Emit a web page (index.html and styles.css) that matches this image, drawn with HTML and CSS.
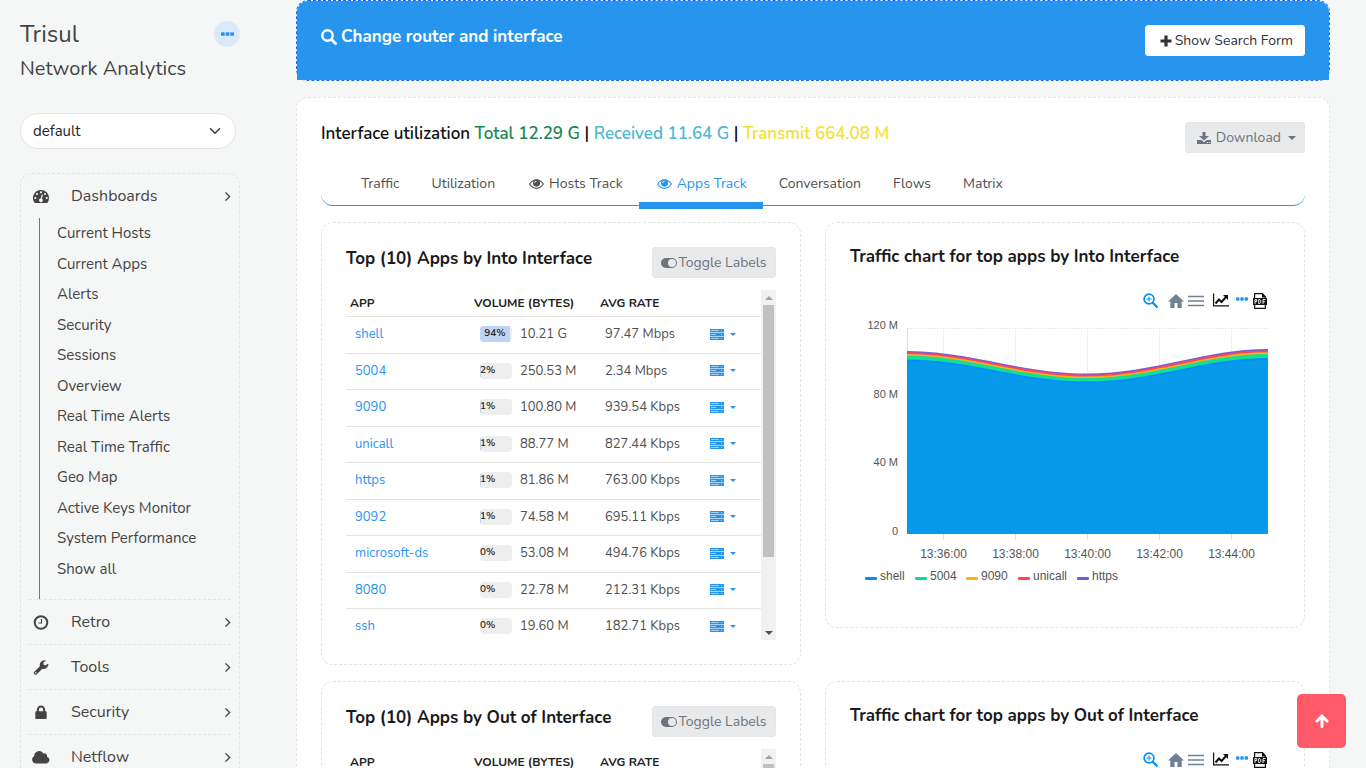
FILE: index.html
```html
<!DOCTYPE html>
<html lang="en">
<head>
<meta charset="utf-8">
<title>Trisul Network Analytics</title>
<link rel="stylesheet" href="styles.css">
</head>
<body>
<svg class="sprite" aria-hidden="true">
  <symbol id="i-chev" viewBox="-3 0 16 16"><path d="M5 2l6 6-6 6" fill="none" stroke="currentColor" stroke-width="2"/></symbol>
  <symbol id="i-down" viewBox="0 0 16 16"><path d="M2 5l6 6 6-6" fill="none" stroke="currentColor" stroke-width="2" stroke-linecap="round" stroke-linejoin="round"/></symbol>
  <symbol id="i-gauge" viewBox="-1 -1 18 15"><path fill="currentColor" fill-rule="evenodd" d="M8 0a8 8 0 0 1 8 8c0 1.600-.4 3-1.200 4.300-.2.400-.5.700-.9.700H2.100c-.4 0-.7-.3-.9-.700A8 8 0 0 1 8 0zM2.300 6.900a1.100 1.100 0 1 0 0 2.200 1.100 1.100 0 0 0 0-2.200zM4 2.900a1.100 1.100 0 1 0 0 2.200 1.100 1.100 0 0 0 0-2.200zM8 1.200a1.100 1.100 0 1 0 0 2.200 1.100 1.100 0 0 0 0-2.200zM12 2.900a1.100 1.100 0 1 0 0 2.200 1.100 1.100 0 0 0 0-2.200zM13.700 6.900a1.100 1.100 0 1 0 0 2.200 1.100 1.100 0 0 0 0-2.200zM8.700 4.500L7.700 8.500a1.800 1.800 0 1 0 1.200.3l1-4z"/></symbol>
  <symbol id="i-clock" viewBox="0.500 0.500 15 15"><circle cx="8" cy="8" r="6.300" fill="none" stroke="currentColor" stroke-width="2"/><path d="M8.500 4.500v4h-3" fill="none" stroke="currentColor" stroke-width="1.200"/></symbol>
  <symbol id="i-wrench" viewBox="0 0 16 16"><path fill="currentColor" fill-rule="evenodd" d="M9.400 9.300l-6.200 6.100c-.5.500-1.200.5-1.700 0l-.9-.9c-.5-.5-.5-1.200 0-1.700l6.200-6.200a5 5 0 0 1 6.700-5.900l-2.900 1.800v2.200l2 1.100 2.900-1.700c.3 0 .4.200.4.500A5 5 0 0 1 9.400 9.300zM2.500 12.700a.8.800 0 1 0 0 1.600.8.800 0 0 0 0-1.600z"/></symbol>
  <symbol id="i-lock" viewBox="0.500 1 15 14.500"><path fill="currentColor" fill-rule="evenodd" d="M4 7V5.500a4 4 0 0 1 8 0V7h.5c.6 0 1 .4 1 1v5.500c0 .6-.4 1-1 1h-9c-.6 0-1-.4-1-1V8c0-.6.400-1 1-1zm2 0h4V5.500a2 2 0 0 0-4 0z"/></symbol>
  <symbol id="i-cloud" viewBox="0 0 18 14"><path fill="currentColor" d="M4 13a4 4 0 0 1-1.800-7.500A5 5 0 0 1 11.500 3 2.700 2.700 0 0 1 15 6.200 3.500 3.500 0 0 1 14.500 13z"/></symbol>
  <symbol id="i-search" viewBox="0 0 16 16"><circle cx="6.500" cy="6.500" r="5.200" fill="none" stroke="currentColor" stroke-width="2.400"/><path d="M10.500 10.500l4 4" stroke="currentColor" stroke-width="2.800" stroke-linecap="round"/></symbol>
  <symbol id="i-plus" viewBox="0 0 12 12"><path d="M6 .5v11M.5 6h11" stroke="currentColor" stroke-width="3.200"/></symbol>
  <symbol id="i-download" viewBox="0 0 14 14"><path fill="currentColor" fill-rule="evenodd" d="M5.500 1h3v4H12L7 9.500 2 5h3.500zM0 9h4.200L7 11.300 9.800 9H14v4H0zm10 2v1h1v-1zm2 0v1h1v-1z"/></symbol>
  <symbol id="i-eye" viewBox="0 0 16 12"><path d="M.7 6C2.600 3 5.100 1.400 8 1.400S13.400 3 15.300 6C13.400 9 10.900 10.600 8 10.600S2.600 9 .7 6z" fill="none" stroke="currentColor" stroke-width="1.200"/><circle cx="8" cy="5" r="3.800" fill="currentColor"/><path d="M6 5a2 2 0 0 1 2-2" stroke="#fff" stroke-width=".9" fill="none"/></symbol>
  <symbol id="i-toggle" viewBox="0 0 16 10"><path fill="currentColor" fill-rule="evenodd" d="M5 0h6a5 5 0 0 1 0 10H5A5 5 0 0 1 5 0zm6 1a4 4 0 1 0 0 8 4 4 0 0 0 0-8z"/></symbol>
  <symbol id="i-server" viewBox="0 0 14 11"><path fill="currentColor" fill-opacity=".4" d="M0 0h14v11H0z"/><path fill="currentColor" d="M0 0h14v3H0zM0 4h14v3H0zM0 8h14v3H0z"/><path stroke="#fff" stroke-opacity=".55" d="M1 1.500h8M1 5.500h5M1 9.500h8M11 1.500h1M11 5.500h1M11 9.500h1"/></symbol>
  <symbol id="i-up" viewBox="0 0 16 16"><path d="M8 13.500V4M3 8l5-5 5 5" fill="none" stroke="currentColor" stroke-width="3" stroke-linecap="round"/></symbol>
  <symbol id="i-dots" viewBox="0 0 14 4"><path fill="currentColor" d="M1 0h2q1 0 1 1v2q0 1-1 1H1Q0 4 0 3V1q0-1 1-1zM6 0h2q1 0 1 1v2q0 1-1 1H6Q5 4 5 3V1q0-1 1-1zM11 0h2q1 0 1 1v2q0 1-1 1h-2q-1 0-1-1V1q0-1 1-1z"/></symbol>
  <symbol id="i-zoom" viewBox="0 0 16 16"><circle cx="6" cy="6" r="4.900" fill="none" stroke="currentColor" stroke-width="1.700"/><path d="M9.500 9.500l5 5" stroke="currentColor" stroke-width="2.300"/><path d="M6 3.500v5M3.500 6h5" stroke="currentColor"/></symbol>
  <symbol id="i-home" viewBox="0 0 16 14"><path fill="currentColor" d="M8 0l8 7.500h-2.300V14H9.500V9h-3v5H2.300V7.500H0z"/></symbol>
  <symbol id="i-menu" viewBox="0 0 16 12"><path stroke="currentColor" stroke-width="1.600" d="M0 1.500h16M0 6h16M0 10.500h16"/></symbol>
  <symbol id="i-line" viewBox="0 0 16 13"><path fill="none" stroke="currentColor" stroke-width="1.200" d="M.6 0v12.400H16"/><path fill="none" stroke="currentColor" stroke-width="2" d="M2.500 10L6 6l2.500 2.500L13 3.500"/><path fill="currentColor" d="M10 1.500h5v5z"/></symbol>
  <symbol id="i-pdf" viewBox="0 0 14 16"><path fill="none" stroke="currentColor" stroke-width="1.200" d="M1.600 5V.6H9.500L12.400 4V5M1.600 12v3.400h10.800V12"/><path fill="currentColor" d="M9 0l4 4.500H9zM0 5h14v7H0z"/><path fill="none" stroke="#fff" stroke-width=".9" d="M2 11V6.500h1.800v2H2M5.700 6.500v4h1.200l.8-.8V7.300l-.8-.8zM10 11V6.500h2.500M10 8.700h2"/></symbol>
</svg>

<div class="layout">
<aside class="sidebar">
  <header class="brand">
    <div><h1 class="brand-name">Trisul</h1><p class="brand-sub">Network Analytics</p></div>
    <button class="round" aria-label="More"><svg class="dots"><use href="#i-dots"/></svg></button>
  </header>
  <label class="context"><select class="context-select" aria-label="Context"><option>default</option></select><svg class="context-arrow"><use href="#i-down"/></svg></label>
  <nav class="nav">
    <a class="nav-item" href="#"><svg class="nav-icon"><use href="#i-gauge"/></svg><span>Dashboards</span><svg class="chev"><use href="#i-chev"/></svg></a>
    <div class="subnav">
      <a href="#">Current Hosts</a><a href="#">Current Apps</a><a href="#">Alerts</a><a href="#">Security</a><a href="#">Sessions</a><a href="#">Overview</a><a href="#">Real Time Alerts</a><a href="#">Real Time Traffic</a><a href="#">Geo Map</a><a href="#">Active Keys Monitor</a><a href="#">System Performance</a><a href="#">Show all</a>
    </div>
    <a class="nav-item" href="#"><svg class="nav-icon"><use href="#i-clock"/></svg><span>Retro</span><svg class="chev"><use href="#i-chev"/></svg></a>
    <a class="nav-item" href="#"><svg class="nav-icon"><use href="#i-wrench"/></svg><span>Tools</span><svg class="chev"><use href="#i-chev"/></svg></a>
    <a class="nav-item" href="#"><svg class="nav-icon"><use href="#i-lock"/></svg><span>Security</span><svg class="chev"><use href="#i-chev"/></svg></a>
    <a class="nav-item" href="#"><svg class="nav-icon"><use href="#i-cloud"/></svg><span>Netflow</span><svg class="chev"><use href="#i-chev"/></svg></a>
  </nav>
</aside>

<main class="main">
  <section class="banner">
    <div class="banner-body">
      <h2 class="banner-title"><svg class="ic16"><use href="#i-search"/></svg> Change router and interface</h2>
      <button class="btn btn-white"><svg class="ic12"><use href="#i-plus"/></svg>Show Search Form</button>
    </div>
  </section>
  <section class="panel">
    <div class="panel-head">
      <h2 class="util">Interface utilization <span class="total">Total 12.29 G</span> | <span class="recv">Received 11.64 G</span> | <span class="xmit">Transmit 664.08 M</span></h2>
      <button class="btn btn-grey btn-download"><svg class="ic14"><use href="#i-download"/></svg>Download<i class="caret"></i></button>
    </div>
    <nav class="tabs">
      <a href="#">Traffic</a><a href="#">Utilization</a><a href="#"><svg class="eye"><use href="#i-eye"/></svg>Hosts Track</a><a href="#" class="active"><svg class="eye"><use href="#i-eye"/></svg>Apps Track</a><a href="#">Conversation</a><a href="#">Flows</a><a href="#">Matrix</a>
    </nav>
    <div class="grid" id="grid"></div>
  </section>
</main>
</div>
<button class="to-top" aria-label="Back to top"><svg class="ic16"><use href="#i-up"/></svg></button>
<script src="app.js"></script>
</body>
</html>
```
FILE: styles.css
```css
* { box-sizing: border-box; }
html { height: 100%; overflow: hidden; }
body { margin: 0; height: 100%; overflow: hidden; background: #f4f7f6; color: #444; font: 14px/20px Nunito, Lato, sans-serif; }
a { color: inherit; text-decoration: none; }
h1, h2, h3, p { margin: 0; font-weight: 400; }
button, select { font: inherit; }
svg { flex: none; }
.sprite { display: none; }
.layout { display: flex; align-items: flex-start; }
.sidebar { width: 240px; flex: none; padding: 18px 0 0 20px; }
.brand { display: flex; justify-content: space-between; align-items: flex-start; }
.brand-name { font-size: 24px; line-height: 32px; }
.brand-sub { font-size: 20px; line-height: 38px; }
.round { width: 26px; height: 26px; margin-top: 3px; padding: 0; border: 0; border-radius: 50%; background: #dce9f8; color: #2795ee; display: flex; align-items: center; justify-content: center; }
.dots { width: 13px; height: 4px; }
.context { display: block; position: relative; margin: 25px 4px 24px 0; }
.context-select { width: 100%; height: 36px; padding: 0 12px; border: 1px solid #e6e4e0; border-radius: 18px; background: #fff; color: #212529; font-size: 15px; appearance: none; }
.context-arrow { position: absolute; right: 15px; top: 12px; width: 12px; height: 12px; color: #343a40; }
.nav { border: 1px dashed #e4e4e1; border-radius: 12px; padding: 0 8px; }
.nav-item { display: flex; align-items: center; height: 45px; font-size: 16px; border-top: 1px dashed #e6e4e0; }
.nav-item:first-child { border-top: 0; height: 44px; }
.nav-item span { flex: 1; padding-left: 21px; }
.nav-icon { width: 18px; height: 15px; margin-left: 3px; }
.chev { width: 11px; height: 11px; }
.subnav { border-left: 1px solid #1aa08f; margin-left: 10px; padding-bottom: 15px; }
.subnav a { display: block; line-height: 31px; padding-left: 17px; font-size: 15px; }
.subnav a:nth-child(even) { line-height: 30px; }
.main { flex: 1; min-width: 0; padding: 0 36px 0 56px; }
.banner { border: 1px dashed #0d6efd; border-radius: 12px; background: #fff; }
.banner-body { display: flex; justify-content: space-between; align-items: flex-start; min-height: 79px; padding: 24px; background: #2795ee; border-radius: 11px 11px 0 0; color: #fff; }
.banner-title { display: flex; align-items: center; gap: 4px; font-size: 17px; line-height: 24px; font-weight: 700; }
.ic16 { width: 16px; height: 16px; }
.ic14 { width: 14px; height: 14px; }
.ic12 { width: 12px; height: 12px; }
.btn { display: flex; align-items: center; height: 31px; border-radius: 3px; border: 1px solid #e6e6e6; padding: 0 8px; font-size: 14px; white-space: nowrap; }
.btn-white { gap: 3px; padding: 0 11px 0 14px; background: #fff; border-color: #fff; color: #333; }
.btn-grey { background: #e8e9eb; color: #6c757d; justify-content: center; }
.btn-download { gap: 5px; padding: 0 8px 0 11px; }
.btn-download .caret { margin-left: 2px; }
.caret { width: 0; border: 4px solid transparent; border-top-color: currentColor; border-bottom: 0; }
.panel { margin-top: 16px; min-height: 720px; padding: 24px; background: #fff; border: 1px dashed #e4e4e1; border-radius: 12px; }
.panel-head { display: flex; justify-content: space-between; align-items: flex-start; }
.util { font-size: 17px; line-height: 24px; font-weight: 600; color: #111; }
.total { color: #198754; }
.recv { color: #4fb9cf; }
.xmit { color: #f3e036; }
.tabs { display: flex; margin-top: 8px; height: 45px; padding-left: 24px; border-bottom: 1px solid #2795ee; border-radius: 12px; }
.tabs a { display: flex; align-items: center; height: 48px; padding: 4px 16px 0; border-bottom: 7px solid transparent; color: #505050; }
.tabs a.active { color: #2795ee; border-bottom-color: #2795ee; }
.eye { width: 15px; height: 12px; margin: 0 5px 0 2px; }
.grid { display: grid; grid-template-columns: 1fr 1fr; gap: 16px 24px; margin-top: 16px; align-items: start; }
.card { border: 1px dashed #e4e4e1; border-radius: 12px; padding: 24px; min-width: 0; }
.chart-card { min-height: 406px; }
.card-head { display: flex; justify-content: space-between; align-items: flex-start; }
.card h3 { font-size: 17px; line-height: 24px; font-weight: 700; color: #1a1a1a; }
.chart-card h3 { line-height: 20px; }
.btn-toggle { width: 124px; gap: 1px; }
.toggle { width: 16px; height: 10px; }
.scroll { height: 350px; margin-top: 12px; overflow: hidden; display: flex; }
.scroll table { flex: 1; border-collapse: collapse; table-layout: fixed; height: max-content; }
.bar { flex: none; width: 15px; background: #f1f1f1; display: flex; flex-direction: column; align-items: center; justify-content: space-between; }
.arrow { width: 0; border: 4px solid transparent; margin: 6px 0 5px; }
.arrow-up { border-top: 0; border-bottom-color: #a3a3a3; }
.arrow-down { border-bottom: 0; border-top-color: #505050; }
.thumb { width: 11px; height: 252px; margin-bottom: auto; background: #c1c1c1; }
th { text-align: left; font-size: 12px; line-height: 16px; font-weight: 700; color: #222; padding: 5px 4px; border-bottom: 1px solid #e6e4e0; white-space: nowrap; }
td { height: 37px; padding: 0 9px 2px; border-bottom: 1px solid #e6e4e0; white-space: nowrap; font-size: 13px; color: #505050; }
tr:nth-child(even) td { height: 36px; }
.c-app { width: 124px; }
.c-vol { width: 126px; }
.c-rate { width: 105px; }
td a, .row-menu { color: #2795ee; }
.vol { display: flex; align-items: center; gap: 8px; }
.meter { width: 32px; height: 16px; border-radius: 4px; background: #eee; overflow: hidden; font-size: 10px; line-height: 14px; font-weight: 600; color: #222; }
.fill { height: 100%; background: #bfd3f2; text-align: center; }
.fill-low { text-align: left; overflow: visible; }
td.vol-cell { padding: 0 0 2px 10px; }
.row-menu { display: flex; align-items: center; gap: 6px; border: 0; background: none; padding: 0; }
.row-menu svg { width: 14px; height: 11px; }
.row-menu .caret { border-width: 3px 3px 0; }
.tools { display: flex; align-items: center; justify-content: flex-end; margin-top: 25px; padding-right: 13px; height: 18px; }
.tools button { display: flex; padding: 0; border: 0; background: none; }
.tools svg { width: 16px; height: 14px; }
.tools .t-zoom { color: #008ffb; margin-right: 9px; }
.tools .t-home, .tools .t-menu { color: #6e8192; margin-right: 4px; }
.tools .t-zoom svg, .tools .t-pdf svg { height: 16px; }
.tools .t-menu { margin-right: 9px; }
.tools .t-line { color: #111; margin-right: 7px; padding-bottom: 3px; }
.tools .t-dots { color: #2795ee; margin-right: 5px; padding-bottom: 4px; }
.tools .t-dots svg { width: 12px; height: 4px; }
.tools .t-pdf { color: #111; padding-bottom: 1px; }
.tools .t-pdf svg { width: 14px; }
.chart { display: block; width: 100%; margin-top: 3px; }
.chart text { font: 12px "Liberation Sans", Arial, sans-serif; fill: #555; }
.chart .ylab { font-size: 11px; text-anchor: end; }
.chart .xlab { text-anchor: middle; }
.to-top { position: fixed; right: 20px; bottom: 20px; width: 49px; height: 54px; border: 0; border-radius: 5px; background: #ff5a69; color: #fff; display: flex; align-items: center; justify-content: center; padding: 0; }
```
FILE: app.js
```javascript
const rows = [
  ["shell", 94, "10.21 G", "97.47 Mbps"],
  ["5004", 2, "250.53 M", "2.34 Mbps"],
  ["9090", 1, "100.80 M", "939.54 Kbps"],
  ["unicall", 1, "88.77 M", "827.44 Kbps"],
  ["https", 1, "81.86 M", "763.00 Kbps"],
  ["9092", 1, "74.58 M", "695.11 Kbps"],
  ["microsoft-ds", 0, "53.08 M", "494.76 Kbps"],
  ["8080", 0, "22.78 M", "212.31 Kbps"],
  ["ssh", 0, "19.60 M", "182.71 Kbps"]
];
const series = [
  ["shell", "#008ffb", 15], ["5004", "#00e396", 65], ["9090", "#feb019", 116],
  ["unicall", "#ff4560", 168], ["https", "#775dd0", 227]
];
const icon = (name, cls = "") => `<svg class="${cls}"><use href="#i-${name}"/></svg>`;

function tableCard(title) {
  const body = rows.map(([app, pct, vol, rate]) => `<tr>
    <td><a href="#">${app}</a></td>
    <td class="vol-cell"><div class="vol"><div class="meter"><div class="fill ${pct < 50 ? "fill-low" : ""}" style="width:${pct}%">${pct}%</div></div>${vol}</div></td>
    <td>${rate}</td>
    <td><button class="row-menu" aria-label="Options for ${app}">${icon("server")}<i class="caret"></i></button></td></tr>`).join("");
  return `<section class="card"><div class="card-head"><h3>${title}</h3>
    <button class="btn btn-grey btn-toggle">${icon("toggle", "toggle")}Toggle Labels</button></div>
    <div class="scroll"><table><thead><tr><th class="c-app">APP</th><th class="c-vol">VOLUME (BYTES)</th><th class="c-rate">AVG RATE</th><th></th></tr></thead><tbody>${body}</tbody></table>
    <div class="bar"><i class="arrow arrow-up"></i><i class="thumb"></i><i class="arrow arrow-down"></i></div></div></section>`;
}

function chart() {
  const wave = (l, m, r) => `M57 ${l}C120 ${l} 170 ${m} 237 ${m}S355 ${r} 418 ${r}`;
  const layers = [["#775dd0", 42, 64.5, 40], ["#ff4560", 43.2, 65.7, 41.5], ["#feb019", 45, 67.5, 43.2], ["#14de94", 46.5, 69, 45], ["#089aea", 51.5, 73.500, 50]];
  const ticks = ["13:36:00", "13:38:00", "13:40:00", "13:42:00", "13:44:00"];
  return `<svg class="chart" viewBox="0 4 430 285" role="img" aria-label="Stacked traffic by app">
    <path d="M57 19.500h361" stroke="#ececec" stroke-dasharray="2 1"/><path d="M57.500 19v206" stroke="#ddd"/>
    ${ticks.map((t, i) => `<path d="M${93.500 + i * 72} 19v206" stroke="#e4e4e4" stroke-dasharray="1 1"/><path d="M${93.500 + i * 72} 225v6" stroke="#e0e0e0"/><text class="xlab" x="${93.500 + i * 72}" y="249">${t}</text>`).join("")}
    ${layers.map(([c, l, m, r], i) => `<path d="${wave(l, m, r)}V225H57z" fill="${c}"/>${i === 4 ? `<path d="${wave(l, m, r)}" fill="none" stroke="#008ffb" stroke-width="2"/>` : ""}`).join("")}
    ${[["120 M", 20], ["80 M", 89], ["40 M", 157], ["0", 226]].map(([t, y]) => `<text class="ylab" x="48" y="${y}">${t}</text>`).join("")}
    ${series.map(([t, c, x]) => `<rect x="${x}" y="268" width="12" height="3" rx="1" fill="${c}"/><text x="${x + 15}" y="271">${t}</text>`).join("")}</svg>`;
}

function chartCard(title) {
  const tools = ["zoom", "home", "menu", "line", "dots", "pdf"].map(n => `<button class="t-${n}" aria-label="${n}">${icon(n)}</button>`).join("");
  return `<section class="card chart-card"><h3>${title}</h3><div class="tools">${tools}</div>${chart()}</section>`;
}

document.getElementById("grid").innerHTML = ["Into", "Out of"].map(d =>
  tableCard(`Top (10) Apps by ${d} Interface`) + chartCard(`Traffic chart for top apps by ${d} Interface`)).join("");
```
